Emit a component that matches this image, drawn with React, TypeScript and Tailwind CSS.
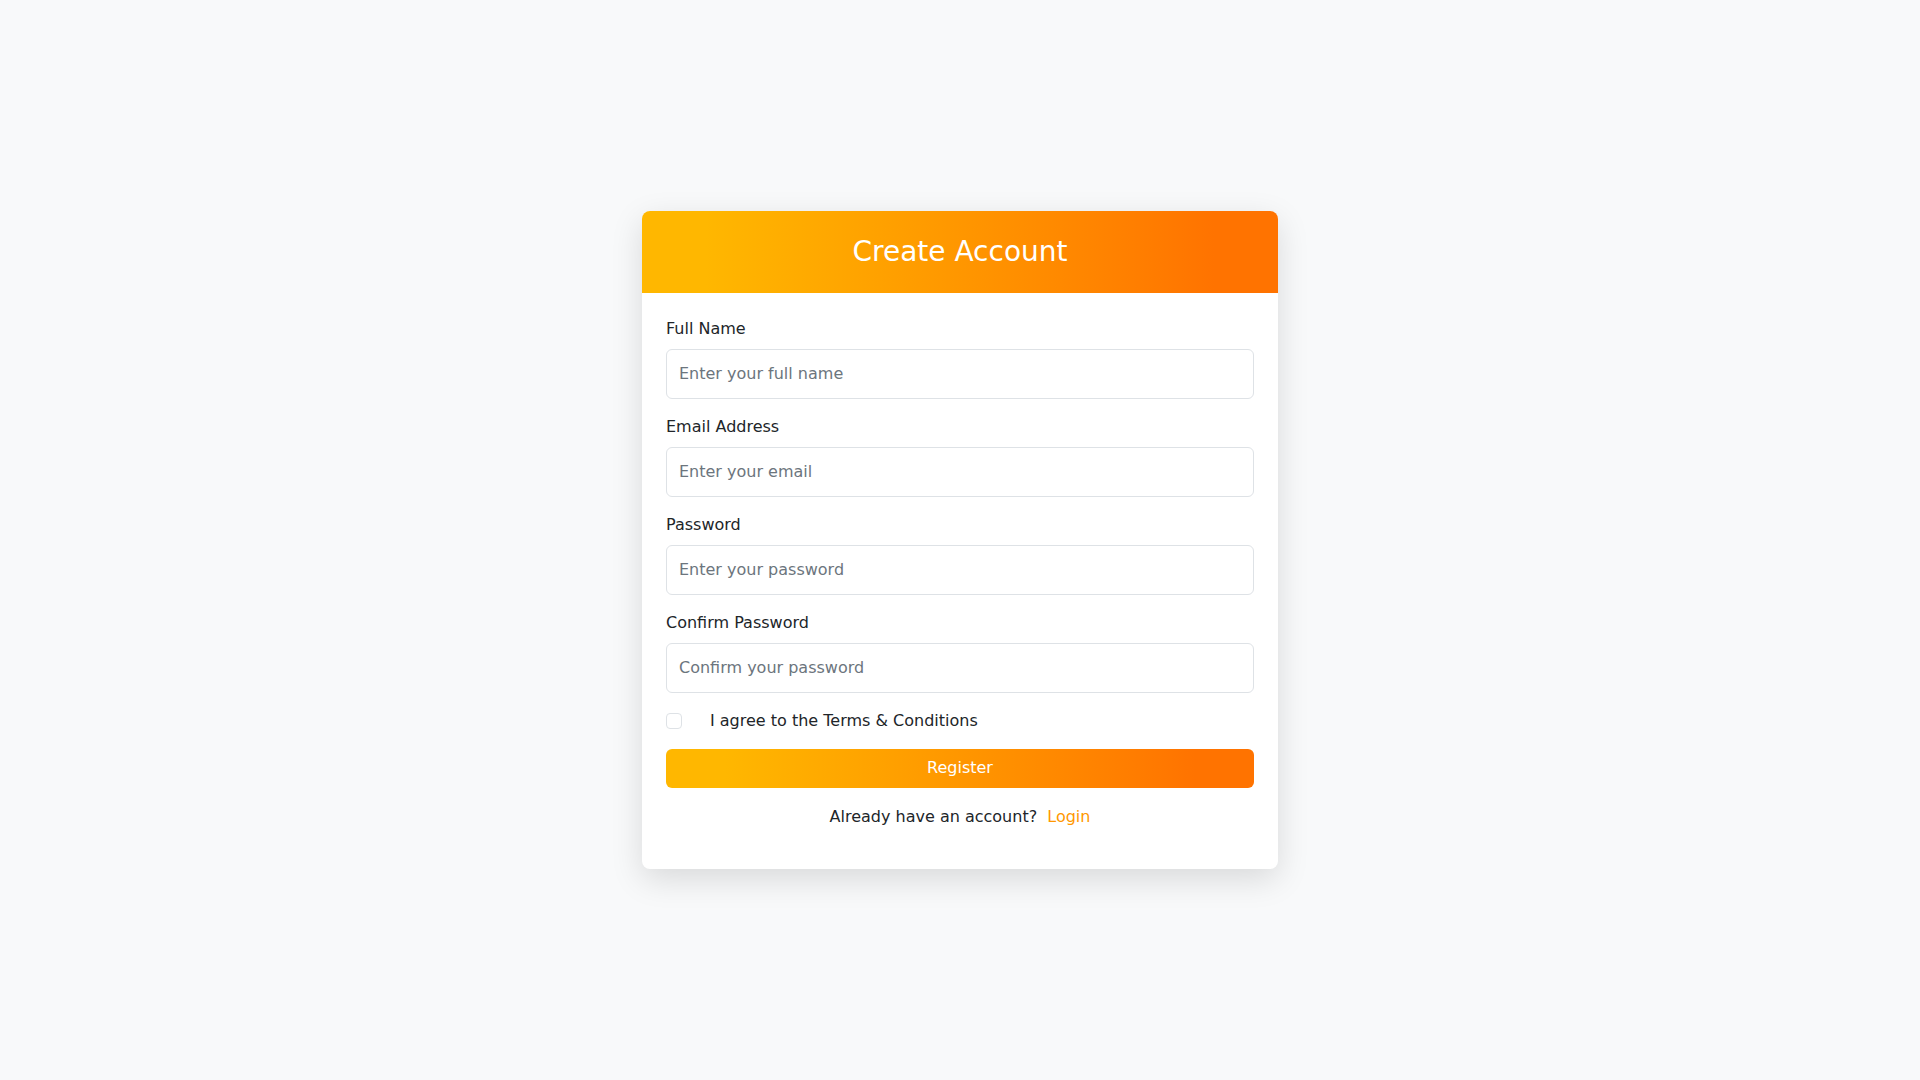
import React from "react";

const fields = [
  { id: "name", label: "Full Name", type: "text", placeholder: "Enter your full name" },
  { id: "email", label: "Email Address", type: "email", placeholder: "Enter your email" },
  { id: "password", label: "Password", type: "password", placeholder: "Enter your password" },
  { id: "confirm", label: "Confirm Password", type: "password", placeholder: "Confirm your password" },
];

export default function App() {
  return (
    <div className="min-h-screen w-full bg-[#f8f9fa] flex items-center justify-center font-['DejaVu_Sans',sans-serif] text-[#212529]">
      <div className="w-[636px] bg-white rounded-lg overflow-hidden shadow-[0_10px_32px_rgba(0,0,0,0.13)]">
        <div className="bg-linear-to-r from-[#ffb700] from-10% to-[#ff7300] to-90% p-6 text-center">
          <h3 className="text-[28px] leading-[1.2] text-white font-normal">Create Account</h3>
        </div>
        <form className="p-6" onSubmit={(e) => e.preventDefault()}>
          {fields.map((f) => (
            <div key={f.id} className="mb-4">
              <label htmlFor={f.id} className="block mb-2 text-base leading-6">
                {f.label}
              </label>
              <input
                id={f.id}
                type={f.type}
                placeholder={f.placeholder}
                className="block w-full border border-[#dee2e6] rounded-md px-3 py-3 text-base leading-6 placeholder:text-[#6c757d] outline-none"
              />
            </div>
          ))}
          <div className="mb-4 flex items-center gap-7 text-base leading-6">
            <input
              type="checkbox"
              id="terms"
              className="appearance-none w-4 h-4 border border-[#dee2e6] rounded bg-white"
            />
            <label htmlFor="terms">I agree to the Terms &amp; Conditions</label>
          </div>
          <button
            type="submit"
            className="w-full h-[39px] rounded-md bg-linear-to-r from-[#ffb700] from-10% to-[#ff7300] to-90% text-white text-base leading-6"
          >
            Register
          </button>
          <p className="mt-[17px] mb-4 text-center text-base leading-6">
            Already have an account?{" "}
            <a href="#" className="ml-[5px] text-[#ff9800]">
              Login
            </a>
          </p>
        </form>
      </div>
    </div>
  );
}
